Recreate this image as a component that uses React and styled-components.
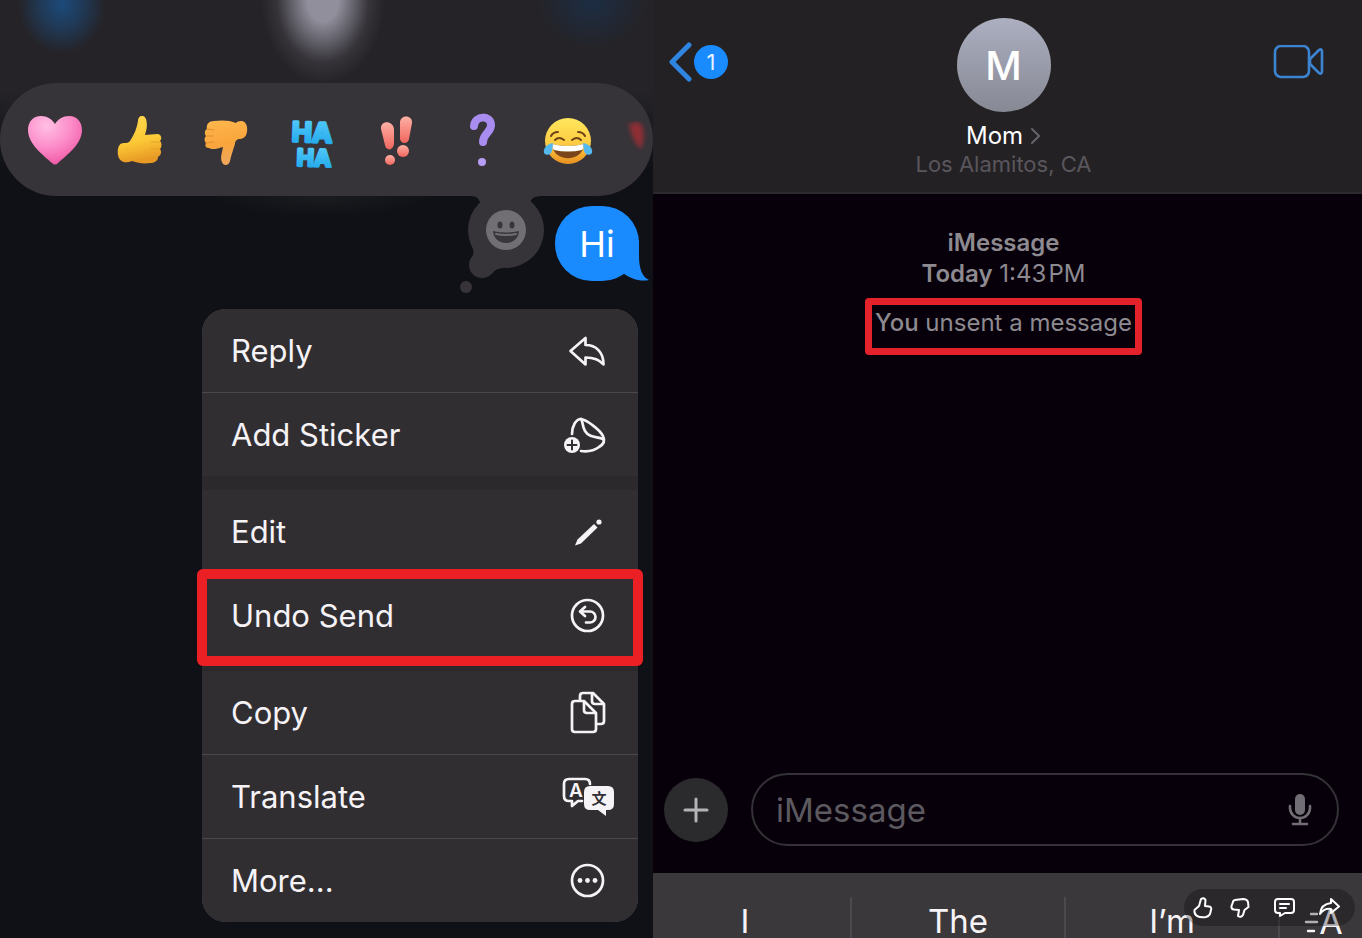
import React from "react";
import styled, { createGlobalStyle } from "styled-components";

const GlobalStyle = createGlobalStyle`
    * {
        box-sizing: border-box;
    }
    body {
        margin: 0;
        background: #07000a;
        font-family: Inter, "Liberation Sans", sans-serif;
        overflow: hidden;
    }
    button, input {
        font-family: inherit;
        border: none;
        background: transparent;
        padding: 0;
        color: inherit;
    }
    svg {
        display: block;
        flex-shrink: 0;
    }
`;

const line = {
    fill: "none",
    stroke: "currentColor",
    strokeLinecap: "round",
    strokeLinejoin: "round",
};

/* ---------- reactions ---------- */

const Heart = () => (
    <svg width="54" height="50" viewBox="0 0 54 50">
        <defs>
            <radialGradient id="heart" cx="0.35" cy="0.2" r="0.9">
                <stop offset="0" stopColor="#ffc0e4" />
                <stop offset="0.5" stopColor="#fc8cc9" />
                <stop offset="1" stopColor="#ee4f9f" />
            </radialGradient>
        </defs>
        <path fill="url(#heart)" d="M27 8C30 3 35 0 41 0C49 0 54 6 54 14C54 28 39 39 30 47Q27 50 24 47C15 39 0 28 0 14C0 6 5 0 13 0C19 0 24 3 27 8Z" />
    </svg>
);

const ThumbUpEmoji = () => (
    <svg width="48" height="50" viewBox="0 0 48 50">
        <defs>
            <linearGradient id="up" x1="0" y1="0" x2="0.2" y2="1">
                <stop offset="0" stopColor="#ffd84e" />
                <stop offset="0.6" stopColor="#fcc937" />
                <stop offset="1" stopColor="#e99a25" />
            </linearGradient>
        </defs>
        <path fill="url(#up)" d="M14 25C18 19 21 12 22 5C22 -1 28 -2 30 3C32 10 30 15 29 19L41 18C46 18 46 23 44 25C46 27 46 31 44 33C46 36 45 39 42 41C42 45 38 47 34 47C28 48 22 47 16 45C10 48 3 46 2 39C1 32 3 27 8 27C11 27 12 27 14 25Z" />
        <path {...line} stroke="#e3a02b" strokeWidth="1" d="M35 26H43M35 33H43M34 40H41" />
    </svg>
);

const ThumbDownEmoji = () => (
    <svg width="46" height="50" viewBox="0 0 46 50">
        <defs>
            <linearGradient id="down" x1="0" y1="0" x2="0.2" y2="1">
                <stop offset="0" stopColor="#ffb84e" />
                <stop offset="0.6" stopColor="#f9a53c" />
                <stop offset="1" stopColor="#f0a75a" />
            </linearGradient>
        </defs>
        <path fill="url(#down)" d="M33 7C36 4 43 4 44 11C45 18 42 23 37 23C34 23 32 25 32 28C30 34 28 40 27 45C26 50 20 50 19 46C17 42 19 37 20 31C14 33 9 34 6 32C2 32 2 29 3 27C1 25 1 22 3 20C1 17 2 14 4 13C3 8 6 5 11 5C18 4 27 4 33 7Z" />
        <path {...line} stroke="#e08c30" strokeWidth="1" d="M4 13L11 14M3 20L10 20M3 27L11 26" />
    </svg>
);

const HaHa = () => (
    <svg width="60" height="60" viewBox="0 0 60 60" fontWeight="700" textAnchor="middle" strokeWidth="3" strokeLinejoin="round">
        <defs>
            <linearGradient id="haha" x1="0" y1="0" x2="0" y2="1">
                <stop offset="0" stopColor="#58cdfb" />
                <stop offset="1" stopColor="#1ba4ea" />
            </linearGradient>
        </defs>
        <g fill="url(#haha)" stroke="url(#haha)">
            <text x="31" y="31" fontSize="27" transform="rotate(2 30 22)">HA</text>
            <text x="33" y="55" fontSize="23" transform="rotate(2 32 46)">HA</text>
        </g>
    </svg>
);

const Exclaim = () => (
    <svg width="36" height="54" viewBox="0 0 36 54">
        <defs>
            <linearGradient id="bang" x1="0" y1="0" x2="0" y2="1">
                <stop offset="0" stopColor="#ffb0a4" />
                <stop offset="1" stopColor="#f0665e" />
            </linearGradient>
        </defs>
        <g fill="url(#bang)">
            <path d="M2 15C1 6 14 6 15 15L15 30C14 37 7 37 6 31Z" />
            <circle cx="11" cy="46" r="5" />
            <path d="M21 8C22 0 34 1 33 9L30 25C29 31 21 30 21 24Z" />
            <circle cx="24" cy="37" r="6" />
        </g>
    </svg>
);

const Question = () => (
    <svg width="28" height="56" viewBox="0 0 28 56">
        <path {...line} stroke="#a98cf0" strokeWidth="8" d="M6 13C7 2 23 2 23 12C23 20 15 20 15 29" />
        <circle cx="14" cy="49" r="4" fill="#b79df5" />
    </svg>
);

const Joy = () => (
    <svg width="50" height="48" viewBox="0 0 50 48">
        <defs>
            <linearGradient id="joy" x1="0" y1="0" x2="0" y2="1">
                <stop offset="0" stopColor="#ffe75e" />
                <stop offset="0.6" stopColor="#fcc93f" />
                <stop offset="1" stopColor="#e88f22" />
            </linearGradient>
        </defs>
        <circle cx="25" cy="24" r="23" fill="url(#joy)" />
        <path {...line} stroke="#6d4315" strokeWidth="2" d="M12 23Q16 19 21 23M29 23Q34 19 38 23M8 19Q10 15 15 15M42 19Q40 15 35 15" />
        <path fill="#7b4519" d="M9 27Q25 31 41 27C40 46 10 46 9 27Z" />
        <path fill="#fff" d="M9 27Q25 31 41 27Q41 31 39 33Q25 36 11 33Q9 31 9 27Z" />
        <path fill="#54b9ef" d="M10 26C3 27 0 32 1 36C3 39 8 38 9 34ZM40 26C47 27 50 32 49 36C47 39 42 38 41 34Z" />
    </svg>
);

const NextReaction = () => (
    <svg width="28" height="40" viewBox="0 0 28 40">
        <defs>
            <filter id="fade" x="-50%" y="-50%" width="200%" height="200%">
                <feGaussianBlur stdDeviation="2" />
            </filter>
        </defs>
        <path fill="#8d2e35" filter="url(#fade)" d="M4 4Q11 -2 17 4Q21 16 16 28Q7 20 4 4Z" />
    </svg>
);

/* ---------- menu icons, all on a 52x44 box ---------- */

const MenuIcon = ({ children }) => (
    <svg width="52" height="44" viewBox="0 0 52 44" {...line} strokeWidth="2.7" aria-hidden="true">
        {children}
    </svg>
);

const ReplyIcon = () => (
    <MenuIcon>
        <path d="M8.500 22L23.500 9V16C34 16 41.500 23 41.500 35.500C37 30 32 28.500 23.500 28.500V35.500Z" />
    </MenuIcon>
);

const StickerIcon = () => (
    <MenuIcon>
        <path d="M10 21C10 13 14 6 19 6C25 7 38 17 41 23C43 27 42 31 37 34C33 37 26 39 19 38" />
        <path d="M19 6C21 8 20 13 23 18C28 26 36 23 41 26" />
        <circle cx="10" cy="32" r="8" fill="currentColor" stroke="none" />
        <path stroke="#322f33" strokeWidth="2" d="M5.500 32H14.500M10 27.500V36.500" />
    </MenuIcon>
);

const EditIcon = () => (
    <MenuIcon>
        <path fill="currentColor" stroke="none" d="M13 35.500L15.500 29.500L32 14L35.500 17.500L19 33.500Z" />
        <circle cx="37" cy="12" r="2.600" fill="currentColor" stroke="none" />
    </MenuIcon>
);

const UndoIcon = () => (
    <MenuIcon>
        <circle cx="25.500" cy="21.500" r="15.500" />
        <path d="M23 13L18 17.500L23 22M18 17.500H28A5.500 5.500 0 0 1 28 28.500H24" />
    </MenuIcon>
);

const CopyIcon = () => (
    <MenuIcon>
        <path d="M18 9V5Q18 2 21 2H31L42 13V30Q42 33 39 33H35" />
        <path d="M30 3V10Q30 13 33 13H41" />
        <path d="M13 10H22L34 22V38Q34 41 31 41H13Q10 41 10 38V13Q10 10 13 10Z" />
        <path d="M22 11V19Q22 22 25 22H33" />
    </MenuIcon>
);

const TranslateIcon = () => (
    <MenuIcon>
        <path d="M20 26H16L10 31V26H7Q2 26 2 21V9Q2 4 7 4H23Q28 4 28 9" />
        <text x="14" y="22" fontSize="19" fontWeight="600" textAnchor="middle" fill="currentColor" stroke="none">A</text>
        <path fill="currentColor" stroke="none" d="M28 11H46Q52 11 52 17V29Q52 35 46 35H44V41L36 35H28Q22 35 22 29V17Q22 11 28 11Z" />
        <text x="37" y="29" fontSize="15" fontWeight="700" textAnchor="middle" fill="#322f33" stroke="none" fontFamily="Noto Sans CJK SC, sans-serif">文</text>
    </MenuIcon>
);

const MoreIcon = () => (
    <MenuIcon>
        <circle cx="25.500" cy="21.500" r="15.500" />
        <g fill="currentColor" stroke="none">
            <circle cx="18" cy="21.500" r="2.400" />
            <circle cx="25.500" cy="21.500" r="2.400" />
            <circle cx="33" cy="21.500" r="2.400" />
        </g>
    </MenuIcon>
);

const reactions = [
    { name: "Love", Icon: Heart },
    { name: "Like", Icon: ThumbUpEmoji },
    { name: "Dislike", Icon: ThumbDownEmoji },
    { name: "Laugh", Icon: HaHa },
    { name: "Emphasize", Icon: Exclaim },
    { name: "Question", Icon: Question },
    { name: "Joy", Icon: Joy },
];

const menuGroups = [
    [
        { label: "Reply", Icon: ReplyIcon },
        { label: "Add Sticker", Icon: StickerIcon },
    ],
    [
        { label: "Edit", Icon: EditIcon },
        { label: "Undo Send", Icon: UndoIcon, marked: true },
    ],
    [
        { label: "Copy", Icon: CopyIcon },
        { label: "Translate", Icon: TranslateIcon },
        { label: "More...", Icon: MoreIcon },
    ],
];

function MessageActions() {
    return (
        <ActionsPanel>
            <ReactionBar>
                {reactions.map(({ name, Icon }) => (
                    <Reaction key={name} aria-label={name}><Icon /></Reaction>
                ))}
                <Reaction aria-label="Next reaction" $end><NextReaction /></Reaction>
            </ReactionBar>
            <MessageRow>
                <svg width="88" height="98" viewBox="0 0 88 98" aria-hidden="true">
                    <g fill="#373439">
                        <path d="M13 0Q20 0 22 6L72 6Q74 0 83 0Z" />
                        <circle cx="48" cy="34" r="38" />
                        <circle cx="24" cy="69" r="13" />
                        <path d="M14 50Q18 58 11 67L34 78Q37 72 46 72Z" />
                        <circle cx="8" cy="91" r="6" />
                    </g>
                    <circle cx="48" cy="34" r="20" fill="#716e74" />
                    <ellipse cx="42" cy="29" rx="2.500" ry="3.500" fill="#39363b" />
                    <ellipse cx="54" cy="29" rx="2.500" ry="3.500" fill="#39363b" />
                    <path fill="#39363b" d="M35 35Q48 38 61 35C60 51 36 51 35 35Z" />
                    <path {...line} stroke="#716e74" strokeWidth="2" d="M38 38Q48 40 58 38" />
                </svg>
                <Bubble>
                    Hi
                    <Tail width="26" height="42" viewBox="0 0 26 42" aria-hidden="true">
                        <path fill="#1a8bff" d="M8 0H16V16C16 28 19 37 26 40C17 42 8 39 0 33Z" />
                    </Tail>
                </Bubble>
            </MessageRow>
            <Menu>
                {menuGroups.map((group) => (
                    <MenuGroup key={group[0].label}>
                        {group.map(({ label, Icon, marked }) => (
                            <MenuItem key={label} $marked={marked}>
                                {label}
                                <Icon />
                            </MenuItem>
                        ))}
                    </MenuGroup>
                ))}
            </Menu>
        </ActionsPanel>
    );
}

function Conversation() {
    return (
        <ChatPanel>
            <Header>
                <BackButton aria-label="Back, 1 unread">
                    <svg width="24" height="40" viewBox="0 0 24 40" {...line} strokeWidth="5">
                        <path d="M20 3L3 20L20 37" />
                    </svg>
                    <Unread>1</Unread>
                </BackButton>
                <Contact>
                    <Avatar>M</Avatar>
                    <ContactName>
                        Mom
                        <svg width="10" height="18" viewBox="0 0 10 18" {...line} stroke="#66636a" strokeWidth="2">
                            <path d="M1 2L8 9L1 16" />
                        </svg>
                    </ContactName>
                    <Location>Los Alamitos, CA</Location>
                </Contact>
                <VideoButton aria-label="Video call">
                    <svg width="52" height="34" viewBox="0 0 52 34" {...line} strokeWidth="2.600">
                        <rect x="2" y="1" width="34" height="31" rx="6" />
                        <path d="M37 14L46 5Q49 3 49 7V26Q49 30 46 28L37 19Z" />
                    </svg>
                </VideoButton>
            </Header>
            <Thread>
                <Stamp><b>iMessage</b></Stamp>
                <Stamp><b>Today</b> 1:43{"\u200A"}PM</Stamp>
                <Notice><b>You</b> unsent a message</Notice>
            </Thread>
            <Composer>
                <AddButton aria-label="Add attachment">
                    <svg width="26" height="26" viewBox="0 0 26 26" {...line} strokeWidth="3">
                        <path d="M13 2V24M2 13H24" />
                    </svg>
                </AddButton>
                <Field>
                    <input type="text" placeholder="iMessage" aria-label="iMessage" />
                    <MicButton aria-label="Dictate">
                        <svg width="24" height="34" viewBox="0 0 24 34" {...line} strokeWidth="2.600">
                            <rect x="7" y="1" width="10" height="21" rx="5" fill="currentColor" stroke="none" />
                            <path d="M2 13V15A10 10 0 0 0 22 15V13M12 25V31M5 31H19" />
                        </svg>
                    </MicButton>
                </Field>
            </Composer>
            <Suggestions>
                <Suggestion $first>I</Suggestion>
                <Suggestion>The</Suggestion>
                <Suggestion>I’m</Suggestion>
                <Suggestion aria-label="Text formatting">
                    <svg width="48" height="32" viewBox="0 0 48 32" {...line} strokeWidth="2.400">
                        <path d="M14 9H20M9 17H20M11 26H17" />
                        <text x="34" y="29" fontSize="34" textAnchor="middle" fill="currentColor" stroke="none">A</text>
                    </svg>
                </Suggestion>
            </Suggestions>
        </ChatPanel>
    );
}

function FeedbackBar() {
    return (
        <Feedback>
            <FeedbackPair>
                <button aria-label="Helpful">
                    <svg width="20" height="22" viewBox="0 0 20 22" {...line} strokeWidth="2">
                        <path d="M8 2Q11 0 12.500 3L12 9L16 9.500Q19 10 18 13L17 17Q16 19 13 20Q8 21 4 19Q1 17 1.500 13L6 9Z" />
                    </svg>
                </button>
                <button aria-label="Not helpful">
                    <svg width="20" height="22" viewBox="0 0 20 22" {...line} strokeWidth="2">
                        <path d="M5 3L13 2Q17 2 18 5L18.500 10L14.500 13L13 18Q11 21 8 19L9 13L4 12.500Q1 12 1.500 9L3 5Q3 3.500 5 3Z" />
                    </svg>
                </button>
            </FeedbackPair>
            <button aria-label="Comment">
                <svg width="21" height="21" viewBox="0 0 21 21" {...line} strokeWidth="2">
                    <path d="M4 2H17Q20 2 20 5V13Q20 16 17 16H11L6 19V16H4Q1 16 1 13V5Q1 2 4 2Z" />
                    <path d="M6 7H15M6 11H12" />
                </svg>
            </button>
            <button aria-label="Share">
                <svg width="21" height="21" viewBox="0 0 21 21" {...line} strokeWidth="2">
                    <path d="M12 2L20 9.500L12 16V12Q5 11 1 17Q2 7 12 6Z" />
                </svg>
            </button>
        </Feedback>
    );
}

function App() {
    return (
        <>
            <GlobalStyle />
            <Page>
                <MessageActions />
                <Conversation />
                <FeedbackBar />
            </Page>
        </>
    );
}

const Page = styled.main`
    position: relative;
    display: grid;
    grid-template-columns: 653fr 709fr;
    height: 100vh;
    overflow: hidden;
`;

const ActionsPanel = styled.section`
    display: flex;
    flex-direction: column;
    min-width: 0;
    padding-top: 83px;
    background:
        radial-gradient(44px 50px at 62px 4px, #1c4a7a, rgba(28, 74, 122, 0.6) 45%, transparent),
        radial-gradient(62px 84px at 323px 0, #918f9b 25%, rgba(125, 123, 134, 0.7) 50%, rgba(90, 88, 96, 0.3) 75%, transparent),
        radial-gradient(56px 50px at 592px 0, #1c2d44, transparent),
        radial-gradient(110px 20px at 322px 196px, #1b1c20, transparent),
        linear-gradient(#252327 90px, #0f1116 170px);
`;

const ReactionBar = styled.div`
    display: grid;
    grid-template-columns: repeat(7, 2fr) 1fr;
    align-items: center;
    height: 113px;
    padding: 3px 0 0 12px;
    border-radius: 57px;
    background: #373439;
    overflow: hidden;
`;

const Reaction = styled.button`
    display: flex;
    justify-content: ${({ $end }) => ($end ? "flex-end" : "center")};
    align-items: center;
`;

const MessageRow = styled.div`
    display: flex;
    justify-content: flex-end;
    gap: 9px;
    padding-right: 14px;
`;

const Bubble = styled.div`
    position: relative;
    display: flex;
    align-items: center;
    justify-content: center;
    width: 84px;
    height: 75px;
    margin-top: 10px;
    border-radius: 37px;
    background: #1a8bff;
    color: #fff;
    font-size: 36px;
`;

const Tail = styled.svg`
    position: absolute;
    right: -10px;
    bottom: -1px;
`;

const Menu = styled.div`
    display: flex;
    flex-direction: column;
    align-self: flex-end;
    gap: 14px;
    width: 436px;
    margin: 15px 15px 0 0;
    border-radius: 24px;
    background: #2c292d;
`;

const MenuGroup = styled.div`
    display: flex;
    flex-direction: column;
    gap: 1px;
    background: #4b484d;
    &:first-child, &:first-child > :first-child {
        border-radius: 24px 24px 0 0;
    }
    &:last-child, &:last-child > :last-child {
        border-radius: 0 0 24px 24px;
    }
`;

const MenuItem = styled.button`
    position: relative;
    display: flex;
    align-items: center;
    justify-content: space-between;
    height: 83px;
    padding: 0 24px 0 29px;
    background: #312e32;
    color: #f6f3f7;
    font-size: 31px;
    text-align: left;
    ${({ $marked }) => $marked && `
        &::after {
            content: "";
            position: absolute;
            z-index: 1;
            inset: -5px -5px -9px;
            border: 10px solid #ea2024;
            border-radius: 6px;
        }
    `}
`;

const ChatPanel = styled.section`
    display: flex;
    flex-direction: column;
    min-width: 0;
    background: #07000a;
`;

const Header = styled.header`
    display: grid;
    grid-template-columns: 1fr auto 1fr;
    align-items: start;
    height: 194px;
    padding: 18px 24px 0 16px;
    background: #242125;
    border-bottom: 2px solid #2d2a2f;
`;

const BackButton = styled.button`
    display: flex;
    align-items: center;
    justify-self: start;
    gap: 1px;
    height: 88px;
    color: #2f86e0;
`;

const Unread = styled.span`
    width: 34px;
    line-height: 34px;
    border-radius: 50%;
    background: #1a8bff;
    color: #e4f1ff;
    font-size: 22px;
    text-align: center;
`;

const Contact = styled.div`
    display: flex;
    flex-direction: column;
    align-items: center;
`;

const Avatar = styled.div`
    width: 94px;
    line-height: 96px;
    height: 94px;
    border-radius: 50%;
    background: linear-gradient(#acafc0, #868894);
    color: #fff;
    font-size: 40px;
    font-weight: 500;
    text-align: center;
`;

const ContactName = styled.div`
    display: flex;
    align-items: center;
    gap: 8px;
    margin-top: 10px;
    color: #fff;
    font-size: 24px;
    line-height: 28px;
`;

const Location = styled.div`
    color: #59565c;
    font-size: 22px;
    line-height: 28px;
`;

const VideoButton = styled.button`
    display: flex;
    align-items: center;
    justify-self: end;
    height: 88px;
    margin-right: 13px;
    color: #3b84d2;
`;

const Thread = styled.div`
    display: flex;
    flex-direction: column;
    align-items: center;
    flex: 1;
    padding: 33px 8px 0 0;
    color: #8d8a90;
    font-size: 24px;
    line-height: 31px;
    b {
        font-weight: 600;
    }
`;

const Stamp = styled.div`
    white-space: nowrap;
`;

const Notice = styled.div`
    margin-top: 9px;
    padding: 2px 3px 10px;
    border: 7px solid #e3222b;
    border-radius: 4px;
    white-space: nowrap;
    b {
        font-weight: 500;
    }
`;

const Composer = styled.div`
    display: flex;
    align-items: center;
    gap: 23px;
    padding: 0 23px 27px 11px;
`;

const AddButton = styled.button`
    display: flex;
    align-items: center;
    justify-content: center;
    flex-shrink: 0;
    width: 64px;
    height: 64px;
    border-radius: 50%;
    background: #2b2a2c;
    color: #b5b3b7;
`;

const Field = styled.div`
    display: flex;
    align-items: center;
    flex: 1;
    min-width: 0;
    height: 73px;
    padding: 0 25px 0 23px;
    border: 2px solid #343137;
    border-radius: 37px;
    input {
        flex: 1;
        min-width: 0;
        color: #fff;
        font-size: 33px;
        outline: none;
    }
    input::placeholder {
        color: #5c595f;
        opacity: 1;
    }
`;

const MicButton = styled.button`
    color: #716e75;
`;

const Suggestions = styled.div`
    display: grid;
    grid-template-columns: 197fr 214fr 214fr 84fr;
    height: 65px;
    padding-top: 24px;
    background: #3b383c;
`;

const Suggestion = styled.button`
    display: flex;
    align-items: center;
    justify-content: center;
    padding: 6px ${({ $first }) => ($first ? "13px" : "0")} 0 0;
    color: #f6f3f7;
    font-size: 33px;
    line-height: 32px;
    & + & {
        border-left: 2px solid #4c494e;
    }
`;

const Feedback = styled.div`
    position: absolute;
    right: 7px;
    bottom: 12px;
    display: flex;
    align-items: center;
    gap: 24px;
    height: 37px;
    padding: 0 15px 0 9px;
    border-radius: 19px;
    background: rgba(0, 0, 0, 0.28);
    color: #fff;
`;

const FeedbackPair = styled.div`
    display: flex;
    gap: 17px;
`;

export default App;
